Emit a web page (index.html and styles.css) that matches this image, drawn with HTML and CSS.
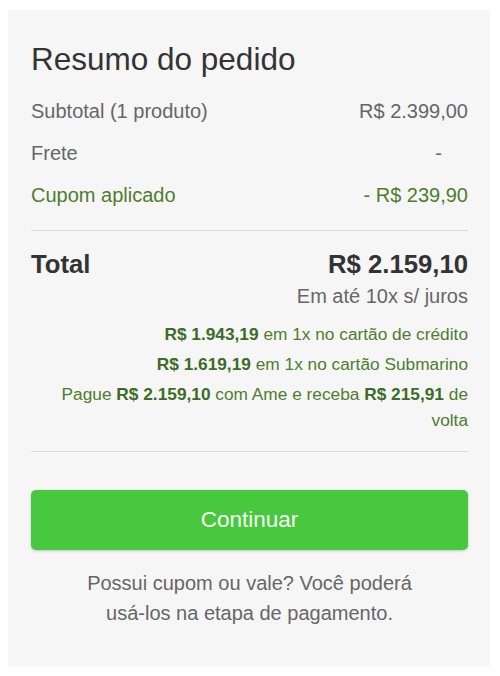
FILE: index.html
```html
<!DOCTYPE html>
<html lang="pt-BR">
<head>
  <meta charset="UTF-8">
  <meta name="viewport" content="width=device-width, initial-scale=1.0">
  <title>Resumo do pedido</title>
  <link rel="stylesheet" href="styles.css">
</head>
<body>
  <div class="summary">
    <h1>Resumo do pedido</h1>

    <div class="row">
      <span>Subtotal (1 produto)</span>
      <span>R$ 2.399,00</span>
    </div>
    <div class="row">
      <span>Frete</span>
      <span class="dash">-</span>
    </div>
    <div class="row discount">
      <span>Cupom aplicado</span>
      <span>- R$ 239,90</span>
    </div>

    <hr>

    <div class="total">
      <span>Total</span>
      <span>R$ 2.159,10</span>
    </div>
    <p class="installments">Em até 10x s/ juros</p>

    <div class="offers">
      <p><strong>R$ 1.943,19</strong> em 1x no cartão de crédito</p>
      <p><strong>R$ 1.619,19</strong> em 1x no cartão Submarino</p>
      <p>Pague <strong>R$ 2.159,10</strong> com Ame e receba <strong>R$ 215,91</strong> de volta</p>
    </div>

    <hr>

    <button class="continue">Continuar</button>

    <p class="note">Possui cupom ou vale? Você poderá usá-los na etapa de pagamento.</p>
  </div>
</body>
</html>
```

FILE: styles.css
```css
body {
  font-family: 'Liberation Sans', Arial, sans-serif;
  margin: 0;
  padding: 0;
  background: #ffffff;
}
.summary {
  margin: 10px 10px 0 8px;
  background: #f6f6f6;
  padding: 24px 22px 38px 23px;
}
h1 {
  font-weight: 400;
  font-size: 31.5px;
  line-height: 36px;
  color: #333;
  margin: 7px 0 13px;
}
.row {
  display: flex;
  justify-content: space-between;
  font-size: 20px;
  line-height: 42px;
  color: #666;
}
.row .dash {
  padding-right: 26px;
}
.discount {
  color: #4f7d2f;
}
hr {
  border: none;
  border-top: 1px solid #dadada;
  margin: 14px 0 18px;
}
.total {
  display: flex;
  justify-content: space-between;
  font-size: 25.7px;
  line-height: 30px;
  font-weight: 700;
  color: #333;
}
.installments {
  text-align: right;
  font-size: 20px;
  line-height: 26px;
  color: #666;
  margin: 4px 0 12px;
}
.offers p {
  text-align: right;
  font-size: 17.3px;
  line-height: 26px;
  color: #4f7d2f;
  margin: 0 0 4px;
}
.offers p:last-child {
  margin-bottom: 0;
}
.offers strong {
  color: #3c6b26;
}
.offers + hr {
  margin: 18px 0 38px;
}
.continue {
  display: block;
  width: 100%;
  height: 60px;
  border: none;
  border-radius: 5px;
  background: #47c83e;
  color: #f6fff2;
  font-family: inherit;
  font-size: 22.5px;
  cursor: pointer;
  box-shadow: 0 1px 3px rgba(0, 0, 0, 0.2);
}
.note {
  text-align: center;
  font-size: 20px;
  line-height: 30px;
  color: #666;
  margin: 18px 0 0;
  padding: 0 50px;
}
```
